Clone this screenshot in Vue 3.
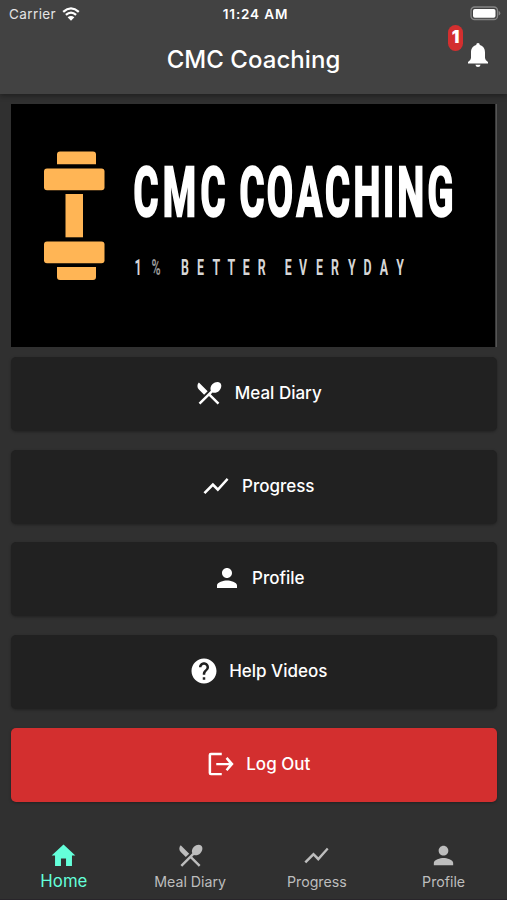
<script setup>
const actions = [
  { label: 'Meal Diary', icon: 'meal' },
  { label: 'Progress', icon: 'chart' },
  { label: 'Profile', icon: 'person' },
  { label: 'Help Videos', icon: 'help' },
  { label: 'Log Out', icon: 'logout', danger: true },
]

const tabs = [
  { label: 'Home', icon: 'home', active: true },
  { label: 'Meal Diary', icon: 'meal' },
  { label: 'Progress', icon: 'chart' },
  { label: 'Profile', icon: 'person' },
]

const icons = {
  meal: 'M8.1 13.34l2.83-2.83L3.91 3.5a4.01 4.01 0 0 0 0 5.66l4.19 4.18zm6.78-1.81c1.53.71 3.68.21 5.27-1.38 1.91-1.91 2.28-4.65.81-6.12-1.46-1.46-4.2-1.1-6.12.81-1.59 1.59-2.09 3.74-1.38 5.27L3.7 19.87l1.41 1.41L12 14.41l6.88 6.88 1.41-1.41L13.41 13l1.47-1.47z',
  chart: 'M3.5 18.49l6-6.01 4 4L22 6.92l-1.41-1.41-7.09 7.97-4-4L2 16.99z',
  person: 'M12 12c2.21 0 4-1.79 4-4s-1.79-4-4-4-4 1.79-4 4 1.79 4 4 4zm0 2c-2.67 0-8 1.34-8 4v2h16v-2c0-2.66-5.33-4-8-4z',
  help: 'M12 2C6.48 2 2 6.48 2 12s4.48 10 10 10 10-4.48 10-10S17.52 2 12 2zm1 17h-2v-2h2v2zm2.07-7.75l-.9.92C13.45 12.9 13 13.5 13 15h-2v-.5c0-1.1.45-2.1 1.17-2.83l1.24-1.26c.37-.36.59-.86.59-1.41 0-1.1-.9-2-2-2s-2 .9-2 2H8c0-2.21 1.79-4 4-4s4 1.79 4 4c0 .88-.36 1.68-.93 2.25z',
  logout: 'M12.6 4.6V3H3.9Q2.1 3 2.1 4.8v14.4Q2.1 21 3.900 21h8.700v-1.900H4.100V4.900h8.500zM8.200 11.100v1.900h10.200l-2.700 3.300 1.500 1.300 4.900-5.600-4.900-5.600-1.500 1.300L18.400 11.100z',
  home: 'M9.900 20.600v-6.200h4.200v6.200h4.900V12H21.800L12 2.800 2.200 12H5v8.600z',
}

// Horizontal squeeze of the banner lettering; x lists give each glyph's centre.
const squeeze = 0.56
const tagSqueeze = 0.55
const spread = (centres, k) => centres.map((c) => (c / k).toFixed(2)).join(' ')
const nameX = spread([135, 168.5, 202, 221, 241, 269, 298.2, 326.5, 356, 377.7, 399.7, 429.5], squeeze)
const tagX = spread([127, 145, 160, 174, 189.5, 205.3, 220.3, 235.3, 250.8, 264, 277.3, 292, 308.6, 324, 340.8, 356.5, 373, 389], tagSqueeze)
</script>

<template>
  <div class="screen">
    <header class="header">
      <div class="status">
        <div class="carrier">
          <span>Carrier</span>
          <svg class="wifi" viewBox="0 0 18 14">
            <path d="M1.2 4.8Q9-2 16.8 4.8M3.9 7.8Q9 3.4 14.1 7.8" />
            <path class="wifi-dot" d="M5.6 10.3Q9 7.5 12.4 10.3L9 13.8z" />
          </svg>
        </div>
        <span class="clock">11:24 AM</span>
        <svg class="battery" viewBox="0 0 31 15">
          <rect class="shell" x="1" y="1" width="26.5" height="12.5" rx="3.6" />
          <rect x="3" y="3" width="22.5" height="8.8" rx="1.8" />
          <path class="cap" d="M28.6 5q1.7.4 1.7 2.3t-1.7 2.3z" />
        </svg>
      </div>
      <div class="titlebar">
        <h1>CMC Coaching</h1>
        <div class="alerts">
          <svg viewBox="0 0 20 24">
            <path d="M10 0Q11.8 0 11.8 2C15.8 3 17 6.2 17 9.6V15Q17.3 17.8 20 19V20.4H0V19Q2.7 17.8 3 15V9.6C3 6.2 4.2 3 8.2 2Q8.2 0 10 0zM7.4 21.7H12.6Q12.2 24 10 24T7.4 21.7z" />
          </svg>
          <span class="badge">1</span>
        </div>
      </div>
    </header>

    <main>
      <svg class="banner" viewBox="0 0 486 243">
        <rect class="edge" width="486" height="243" />
        <rect width="484.3" height="243" />
        <g class="dumbbell">
          <path d="M46 60.3V50.5Q46 47.500 49 47.500H82Q85 47.500 85 50.500V60.300zM46 163H85V173Q85 176 82 176H49Q46 176 46 173z" />
          <rect x="33" y="64.5" width="60.5" height="21.7" rx="3" />
          <rect x="54.5" y="90" width="17.5" height="43.3" />
          <rect x="33" y="137.5" width="60.5" height="21.7" rx="3" />
        </g>
        <text class="name" :x="nameX" y="112.5" :transform="`scale(${squeeze} 1)`">CMC COACHING</text>
        <text class="tagline" :x="tagX" y="171" :transform="`scale(${tagSqueeze} 1)`">1<tspan class="dim">%</tspan> BETTER EVERYDAY</text>
      </svg>

      <div class="actions">
        <button v-for="a in actions" :key="a.label" :class="{ danger: a.danger }">
          <svg viewBox="0 0 24 24"><path :d="icons[a.icon]" /></svg>
          <span>{{ a.label }}</span>
        </button>
      </div>
    </main>

    <nav>
      <a v-for="t in tabs" :key="t.label" :class="{ active: t.active }">
        <svg viewBox="0 0 24 24"><path :d="icons[t.icon]" /></svg>
        <span>{{ t.label }}</span>
      </a>
    </nav>
  </div>
</template>

<style>
body {
  margin: 0;
  background: #303030;
}
</style>

<style scoped>
.screen {
  width: 507px;
  height: 900px;
  display: flex;
  flex-direction: column;
  overflow: hidden;
  background: #303030;
  color: #fff;
  font-family: Inter, "Liberation Sans", sans-serif;
}
svg {
  display: block;
  fill: currentColor;
}
.header {
  height: 94px;
  flex: none;
  background: #424242;
  box-shadow: 0 2px 5px rgba(0, 0, 0, 0.35);
}
.status {
  height: 27px;
  display: grid;
  grid-template-columns: 1fr auto 1fr;
  align-items: center;
  padding: 0 6px 0 9px;
  font-size: 13.5px;
}
.carrier {
  display: flex;
  align-items: center;
  gap: 6px;
  color: #e4e4e4;
  letter-spacing: 0.4px;
}
.wifi {
  width: 18px;
  height: 14px;
  fill: none;
  stroke: #fff;
  stroke-width: 2.3;
}
.wifi-dot {
  fill: #fff;
  stroke: none;
}
.clock {
  font-weight: 600;
  font-size: 13.5px;
  letter-spacing: 0.85px;
  margin-right: -1px;
}
.battery {
  width: 31px;
  height: 15px;
  justify-self: end;
}
.shell {
  fill: none;
  stroke: #858585;
  stroke-width: 1.3;
}
.cap {
  fill: #858585;
}
.titlebar {
  height: 67px;
  display: grid;
  grid-template-columns: 1fr auto 1fr;
  align-items: center;
}
h1 {
  grid-column: 2;
  margin: 0 0 2px;
  font-size: 24px;
  line-height: 30px;
  font-weight: 500;
  letter-spacing: 0.05px;
}
.alerts {
  position: relative;
  justify-self: end;
  width: 20px;
  margin: 0 19px 11px 0;
}
.alerts svg {
  width: 20px;
  height: 24px;
}
.badge {
  position: absolute;
  left: -20px;
  top: -18px;
  width: 15px;
  height: 26px;
  border-radius: 8px;
  background: #d32f2f;
  font-size: 17px;
  line-height: 25px;
  font-weight: 900;
  text-align: center;
}
main {
  flex: 1;
  padding: 10px 10px 0 11px;
}
.banner {
  width: 486px;
  height: 243px;
  fill: #000;
}
.edge {
  fill: #555;
}
.dumbbell {
  fill: #ffb555;
}
.name,
.tagline {
  font-family: Roboto, sans-serif;
  text-anchor: middle;
  fill: #fff;
}
.name {
  font-size: 68px;
  font-weight: 700;
  stroke: #fff;
  stroke-width: 2.4px;
}
.tagline {
  font-size: 22.5px;
  font-weight: 700;
  fill: #d6d6d6;
}
.tagline .dim {
  fill: #999;
}
.actions {
  display: flex;
  flex-direction: column;
  gap: 18.8px;
  padding-top: 9.8px;
}
button {
  height: 74px;
  display: flex;
  align-items: center;
  justify-content: center;
  gap: 10.5px;
  border: 0;
  padding: 0 0 2px 8px;
  border-radius: 5px;
  background: #212121;
  box-shadow: 0 1px 3px rgba(0, 0, 0, 0.3);
  color: #fff;
  font: 500 17px/24px Inter, "Liberation Sans", sans-serif;
}
button svg {
  width: 30px;
  height: 30px;
}
.danger {
  background: #d32f2f;
}
nav {
  flex: none;
  height: 59px;
  display: grid;
  grid-template-columns: repeat(4, 1fr);
  border-bottom: 1px solid #28252a;
}
nav a {
  display: flex;
  flex-direction: column;
  align-items: center;
  padding-top: 1px;
  color: #bdbdbd;
  font-size: 14.2px;
  line-height: 20px;
}
nav svg {
  width: 29px;
  height: 29px;
  margin-bottom: 2px;
}
nav .active {
  color: #64ffda;
  font-size: 16.8px;
  line-height: 19px;
  padding-left: 1px;
}
</style>
